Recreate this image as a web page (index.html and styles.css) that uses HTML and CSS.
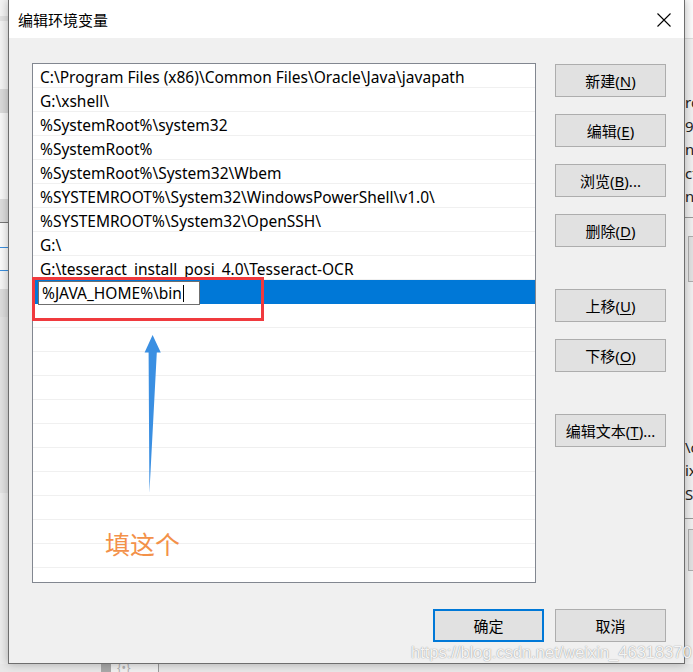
FILE: index.html
```html
<!DOCTYPE html>
<html lang="zh-CN">
<head>
<meta charset="utf-8">
<title>编辑环境变量</title>
<link rel="stylesheet" href="styles.css">
</head>
<body>
<div class="screen">
  <div class="bg-left">
    <div class="b b1"></div><div class="b b2"></div><div class="b b3"></div><div class="b b4"></div>
    <div class="b b5"></div><div class="b b6"></div><div class="b b7"></div><div class="b b8"></div>
    <div class="b b9"></div><div class="b b10"></div><div class="b b11"></div><div class="b b12"></div>
    <div class="b b13"></div><div class="b b14"></div><div class="b b15"></div>
  </div>
  <div class="bg-right">
    <div class="r-top"></div>
    <div class="r-text">
      <div>ro</div><div>9</div><div>np</div><div>ct</div><div>np</div>
    </div>
    <div class="r-line"></div>
    <div class="r-box"></div>
    <div class="r-text r-text2">
      <div>\c</div><div>ix</div><div>SE</div>
    </div>
    <div class="r-line r-line2"></div>
    <div class="r-box r-box2"></div>
  </div>
  <div class="bg-bottom">
    <div class="bb-dark"></div>
    <div class="bb-light"><span class="bb-icon">{•}</span></div>
  </div>

  <div class="dialog">
    <div class="titlebar">
      <span class="title">编辑环境变量</span>
      <svg class="close" width="14" height="14" viewBox="0 0 14 14"><path d="M0.5 0.5 L13.5 13.5 M13.5 0.5 L0.5 13.5" stroke="#000" stroke-width="1.1" fill="none"/></svg>
    </div>
    <div class="content">
      <div class="main">
        <div class="list">
          <div class="row">C:\Program Files (x86)\Common Files\Oracle\Java\javapath</div>
          <div class="row">G:\xshell\</div>
          <div class="row">%SystemRoot%\system32</div>
          <div class="row">%SystemRoot%</div>
          <div class="row">%SystemRoot%\System32\Wbem</div>
          <div class="row">%SYSTEMROOT%\System32\WindowsPowerShell\v1.0\</div>
          <div class="row">%SYSTEMROOT%\System32\OpenSSH\</div>
          <div class="row">G:\</div>
          <div class="row wide">G:\tesseract install posi 4.0\Tesseract-OCR</div>
          <div class="row selected"><span class="editbox">%JAVA_HOME%\bin<span class="caret"></span></span></div>
          <div class="row"></div><div class="row"></div><div class="row"></div><div class="row"></div>
          <div class="row"></div><div class="row"></div><div class="row"></div><div class="row"></div>
          <div class="row"></div><div class="row"></div><div class="row"></div><div class="row"></div>
        </div>
        <div class="side">
          <div class="btn">新建(<u>N</u>)</div>
          <div class="btn">编辑(<u>E</u>)</div>
          <div class="btn">浏览(<u>B</u>)...</div>
          <div class="btn">删除(<u>D</u>)</div>
          <div class="btn far">上移(<u>U</u>)</div>
          <div class="btn">下移(<u>O</u>)</div>
          <div class="btn far">编辑文本(<u>T</u>)...</div>
        </div>
      </div>
      <div class="footer">
        <div class="btn primary">确定</div>
        <div class="btn">取消</div>
      </div>
    </div>
  </div>

  <div class="annot">
    <div class="redbox"></div>
    <svg class="arrow" width="693" height="672" viewBox="0 0 693 672">
      <path d="M152.6 335 L160.8 352.5 L156.8 352.5 L149.4 493 L148.6 352.5 L144.6 352.5 Z" fill="#3a8fe2"/>
    </svg>
    <div class="note">填这个</div>
  </div>
  <div class="watermark">https://blog.csdn.net/weixin_46318370</div>
</div>
</body>
</html>
```
FILE: styles.css
```css
html, body {
  margin: 0;
  padding: 0;
}
body {
  width: 693px;
  height: 672px;
  overflow: hidden;
  background: #ececec;
  font-family: "Noto Sans", "Noto Sans CJK SC", sans-serif;
}
.screen {
  position: relative;
  width: 693px;
  height: 672px;
  overflow: hidden;
  background: #ececec;
}

/* background windows (desktop) */
.bg-left {
  position: absolute;
  left: 0;
  top: 0;
  width: 8px;
  height: 672px;
  display: flex;
  flex-direction: column;
}
.b { flex: none; }
.b1 { height: 16px; background: #f3f3f3; }
.b2 { height: 5px; background: #e2e2e2; }
.b3 { height: 68px; background: #f3f3f3; }
.b4 { height: 24px; background: #dadada; }
.b5 { height: 86px; background: #f7f7f7; }
.b6 { height: 23px; background: #dcdcdc; }
.b7 { height: 1px; background: #777; }
.b8 { height: 24px; background: #fafafa; }
.b9 { height: 1px; background: #3c8fde; }
.b10 { height: 22px; background: #fafafa; }
.b11 { height: 1px; background: #3c8fde; }
.b12 { height: 18px; background: #f5f5f5; }
.b13 { height: 28px; background: #dcdcdc; }
.b14 { height: 176px; background: #e2e2e2; }
.b15 { flex: 1; background: #ececec; }

.bg-right {
  position: absolute;
  left: 684px;
  top: 0;
  width: 9px;
  height: 672px;
  background: #f0f0f0;
  overflow: hidden;
  font-size: 15px;
  color: #222;
}
.r-top { height: 38px; background: #fbfbfb; border-bottom: 1px solid #dcdcdc; }
.r-text { margin-top: 52px; line-height: 23.5px; margin-left: 1px; }
.r-text2 { margin-top: 154px; }
.r-line { margin-top: 8px; height: 1px; background: #999; }
.r-box { margin-top: 18px; height: 44px; background: #e1e1e1; border: 1px solid #adadad; border-right: none; margin-left: 4px; }
.r-line2 { margin-top: 12px; }
.r-box2 { margin-top: 10px; height: 40px; }

.bg-bottom {
  position: absolute;
  left: 0;
  top: 664px;
  width: 693px;
  height: 8px;
  background: #e8e8e8;
  display: flex;
}
.bb-dark { margin-left: 101px; width: 10px; background: #a8a8a8; }
.bb-light {
  width: 47px;
  background: #f0f0f0;
  border-right: 1px solid #9a9a9a;
  overflow: hidden;
  font-size: 12px;
  color: #b0b0b0;
  line-height: 8px;
  text-indent: 6px;
}

/* dialog */
.dialog {
  position: relative;
  z-index: 1;
  margin-left: 8px;
  width: 677px;
  height: 664px;
  box-sizing: border-box;
  background: #f0f0f0;
  border: 1px solid #6e6e6e;
  border-top: none;
  box-shadow: 0 0 9px rgba(0, 0, 0, 0.28);
  display: flex;
  flex-direction: column;
}
.titlebar {
  flex: none;
  height: 38px;
  background: #fff;
  display: flex;
  align-items: center;
  justify-content: space-between;
  padding: 0 13px 0 9px;
}
.title {
  font-family: "Noto Sans CJK SC", sans-serif;
  font-size: 15px;
  color: #000;
  margin-top: 1px;
}
.close { display: block; margin-top: 1px; }

.content {
  flex: 1;
  display: flex;
  flex-direction: column;
  padding: 25px 18px 21px 23px;
}
.main {
  display: flex;
  gap: 19px;
}
.list {
  flex: none;
  width: 504px;
  height: 520px;
  box-sizing: border-box;
  border: 1px solid #828790;
  background: #fff;
  overflow: hidden;
}
.row {
  height: 24px;
  box-sizing: border-box;
  border-bottom: 1px solid #f0f0f0;
  padding-left: 7px;
  padding-top: 1px;
  font-size: 15.5px;
  line-height: 24px;
  white-space: nowrap;
  color: #000;
  overflow: hidden;
}
.row.wide { word-spacing: 3px; }
.row.selected {
  background: #0078d7;
  border-bottom-color: #0078d7;
  padding-left: 5px;
  padding-top: 0;
  overflow: visible;
}
.editbox {
  display: inline-flex;
  align-items: center;
  width: 162px;
  height: 24px;
  box-sizing: border-box;
  margin-top: 1px;
  vertical-align: top;
  border: 1px solid #6f6f6f;
  background: #fff;
  padding-left: 3px;
  font-size: 15.5px;
  line-height: 20px;
}
.caret {
  display: inline-block;
  width: 1px;
  height: 17px;
  margin-left: 1px;
  background: #000;
}

.side {
  flex: none;
  width: 111px;
  display: flex;
  flex-direction: column;
  padding-top: 1px;
}
.btn {
  flex: none;
  height: 33px;
  box-sizing: border-box;
  border: 1px solid #adadad;
  background: #e1e1e1;
  display: flex;
  align-items: center;
  justify-content: center;
  font-size: 15px;
  color: #000;
  white-space: nowrap;
}
.btn u { text-underline-offset: 2px; }
.side .btn + .btn { margin-top: 17px; }
.side .btn.far { margin-top: 42px; }

.footer {
  margin-top: 26px;
  display: flex;
  justify-content: flex-end;
  gap: 11px;
}
.footer .btn { width: 111px; }
.btn.primary { border: 2px solid #0078d7; }

/* annotations over the screenshot */
.annot {
  position: absolute;
  left: 0;
  top: 0;
  width: 693px;
  height: 672px;
  z-index: 2;
  pointer-events: none;
}
.redbox {
  position: absolute;
  left: 32px;
  top: 277px;
  width: 232px;
  height: 44px;
  box-sizing: border-box;
  border: 3px solid #f03a3e;
}
.arrow {
  position: absolute;
  left: 0;
  top: 0;
}
.note {
  position: absolute;
  left: 105px;
  top: 531px;
  font-family: "Noto Sans CJK SC", sans-serif;
  font-size: 25px;
  line-height: 25px;
  color: #f39149;
}
.watermark {
  position: absolute;
  z-index: 3;
  left: 411px;
  top: 643px;
  font-family: "Liberation Sans", Arial, sans-serif;
  font-size: 16.5px;
  color: rgba(255, 255, 255, 0.92);
  text-shadow: 0 0 1px rgba(0, 0, 0, 0.4), 0 0 2px rgba(0, 0, 0, 0.12);
  white-space: nowrap;
}
```
